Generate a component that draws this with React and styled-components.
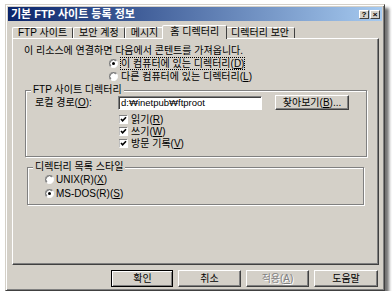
import React from 'react'
import styled, { createGlobalStyle, css } from 'styled-components'

const GlobalStyle = createGlobalStyle`
  html, body {
    margin: 0;
    background: #fff;
  }
  body {
    font-family: "Liberation Sans", "Noto Sans CJK KR", sans-serif;
    font-size: 10px;
    line-height: 12px;
    color: #000;
  }
`

const Page = styled.div`
  padding: 4px 0 0 5px;
`

const Window = styled.div`
  width: 380px;
  height: 287px;
  box-sizing: border-box;
  background: #d4d0c8;
  border: 1px solid;
  border-color: #d4d0c8 #404040 #404040 #d4d0c8;
  box-shadow: inset 1px 1px #fff, inset -1px -1px #808080, 4px 4px 3px rgba(0, 0, 0, 0.55);
  padding: 2px;
  display: flex;
  flex-direction: column;
`

const TitleBar = styled.div`
  height: 14px;
  background: linear-gradient(to right, #0a246a, #a6caf0);
  display: flex;
  align-items: center;
  padding: 0 2px 0 3px;
`

const Title = styled.div`
  flex: 1;
  color: #fff;
  font-weight: bold;
  font-size: 11px;
  line-height: 14px;
`

const CaptionButton = styled.div`
  width: 10px;
  height: 9px;
  margin-left: 1px;
  background: #d4d0c8;
  box-sizing: border-box;
  border: 1px solid;
  border-color: #fff #404040 #404040 #fff;
  font: bold 8px "Liberation Sans", sans-serif;
  line-height: 7px;
  text-align: center;
`

const Body = styled.div`
  flex: 1;
  display: flex;
  flex-direction: column;
  padding: 5px 3px 0 4px;
`

const TabRow = styled.div`
  display: flex;
  align-items: flex-end;
  height: 12px;
  position: relative;
  z-index: 1;
`

const Tab = styled.div`
  height: 10px;
  line-height: 10px;
  padding: 0 5px;
  border: 1px solid;
  border-bottom: none;
  border-color: #fff #404040 transparent #fff;
  border-radius: 2px 2px 0 0;
  white-space: nowrap;
  ${({ $active }) =>
    $active &&
    css`
      height: 13px;
      line-height: 12px;
      margin: 0 -2px -1px;
      padding: 0 7px;
      background: #d4d0c8;
      position: relative;
    `}
`

const Panel = styled.div`
  height: 227px;
  box-sizing: border-box;
  border: 1px solid;
  border-color: #fff #404040 #404040 #fff;
  box-shadow: inset -1px -1px #808080;
  padding-top: 6px;
  display: flex;
  flex-direction: column;
`

const Intro = styled.div`
  height: 12px;
  margin-left: 11px;
`

const Line = styled.div`
  display: flex;
  align-items: center;
  height: ${({ $h }) => $h}px;
  line-height: ${({ $h }) => Math.min($h, 11)}px;
  gap: ${({ $gap }) => $gap ?? 3}px;
  white-space: nowrap;
`

const Choices = styled.div`
  margin-left: 96px;
  display: flex;
  flex-direction: column;
`

const Focus = styled.span`
  outline: 1px dotted #000;
`

const Key = styled.span`
  text-decoration: underline;
`

const Group = styled.div`
  position: relative;
  margin: ${({ $top }) => $top}px 0 0 ${({ $left }) => $left}px;
  width: ${({ $w }) => $w}px;
  height: ${({ $h }) => $h}px;
  box-sizing: border-box;
  border: 1px solid #808080;
  box-shadow: inset 1px 1px #fff, 1px 1px #fff;
  padding: 4px 0 0 ${({ $pad }) => $pad}px;
  display: flex;
  flex-direction: column;
`

const Legend = styled.span`
  position: absolute;
  top: -6px;
  left: 5px;
  padding: 0 2px;
  background: #d4d0c8;
  line-height: 10px;
`

const PathRow = styled.div`
  display: flex;
  align-items: center;
  height: 15px;
  line-height: 11px;
`

const PathLabel = styled.div`
  width: 83px;
`

const TextInput = styled.div`
  width: 144px;
  height: 14px;
  box-sizing: border-box;
  background: #fff;
  border: 1px solid;
  border-color: #808080 #fff #fff #808080;
  box-shadow: inset 1px 1px #404040;
  padding-left: 2px;
  font-size: 9.5px;
  line-height: 12px;
`

const Button = styled.div`
  width: ${({ $w }) => $w}px;
  height: ${({ $h }) => $h}px;
  box-sizing: border-box;
  border: 1px solid;
  border-color: #fff #404040 #404040 #fff;
  box-shadow: inset -1px -1px #808080;
  display: flex;
  align-items: center;
  justify-content: center;
  white-space: nowrap;
  ${({ $default }) =>
    $default &&
    css`
      outline: 1px solid #000;
      outline-offset: -1px;
      border-width: 2px 1px 1px 2px;
    `}
  ${({ $disabled }) =>
    $disabled &&
    css`
      color: #808080;
      text-shadow: 1px 1px #fff;
    `}
`

const BrowseButton = styled(Button)`
  margin-left: 13px;
`

const Checks = styled.div`
  margin-top: 3px;
  padding-left: 84px;
  display: flex;
  flex-direction: column;
`

const ButtonRow = styled.div`
  display: flex;
  justify-content: flex-end;
  gap: 5px;
  margin-top: 5px;
  padding-right: 1px;
`

const Radio = ({ checked }) => (
  <svg width="9" height="9" viewBox="0 0 12 12">
    <circle cx="6" cy="6" r="5.5" fill="#fff" stroke="#fff" />
    <path d="M1.8 10.2 A5.5 5.5 0 0 1 10.2 1.8" stroke="#808080" fill="none" strokeWidth="1.2" />
    <path d="M2.6 9.4 A4.5 4.5 0 0 1 9.4 2.6" stroke="#404040" fill="none" strokeWidth="1" />
    {checked && <circle cx="6" cy="6" r="2" fill="#000" />}
  </svg>
)

const Check = () => (
  <svg width="9" height="9" viewBox="0 0 9 9">
    <rect x="0" y="0" width="9" height="9" fill="#fff" />
    <path d="M0 8.5 V0.5 H8.5" stroke="#808080" fill="none" />
    <path d="M0.5 9 V9 H9 V0" stroke="#fff" fill="none" />
    <path d="M2 4 L3.6 5.8 L7 2.2" stroke="#000" strokeWidth="1.6" fill="none" />
  </svg>
)

export default function App() {
  return (
    <Page>
      <GlobalStyle />
      <Window>
        <TitleBar>
          <Title>기본 FTP 사이트 등록 정보</Title>
          <CaptionButton>?</CaptionButton>
          <CaptionButton>×</CaptionButton>
        </TitleBar>
        <Body>
          <TabRow>
            <Tab>FTP 사이트</Tab>
            <Tab>보안 계정</Tab>
            <Tab>메시지</Tab>
            <Tab $active>홈 디렉터리</Tab>
            <Tab>디렉터리 보안</Tab>
          </TabRow>
          <Panel>
            <Intro>이 리소스에 연결하면 다음에서 콘텐트를 가져옵니다.</Intro>
            <Choices>
              <Line $h={13}>
                <Radio checked />
                <Focus>
                  이 컴퓨터에 있는 디렉터리(<Key>D</Key>)
                </Focus>
              </Line>
              <Line $h={13}>
                <Radio />
                <span>
                  다른 컴퓨터에 있는 디렉터리(<Key>L</Key>)
                </span>
              </Line>
            </Choices>
            <Group $top={7} $left={12} $w={342} $h={67} $pad={9}>
              <Legend>FTP 사이트 디렉터리</Legend>
              <PathRow>
                <PathLabel>
                  로컬 경로(<Key>O</Key>):
                </PathLabel>
                <TextInput>d:₩inetpub₩ftproot</TextInput>
                <BrowseButton $w={74} $h={15}>
                  찾아보기(<Key>B</Key>)...
                </BrowseButton>
              </PathRow>
              <Checks>
                <Line $h={12}>
                  <Check />
                  <span>
                    읽기(<Key>R</Key>)
                  </span>
                </Line>
                <Line $h={12}>
                  <Check />
                  <span>
                    쓰기(<Key>W</Key>)
                  </span>
                </Line>
                <Line $h={12}>
                  <Check />
                  <span>
                    방문 기록(<Key>V</Key>)
                  </span>
                </Line>
              </Checks>
            </Group>
            <Group $top={10} $left={14} $w={337} $h={38} $pad={17}>
              <Legend>디렉터리 목록 스타일</Legend>
              <Line $h={14} $gap={2}>
                <Radio />
                <span>
                  UNIX(R)(<Key>X</Key>)
                </span>
              </Line>
              <Line $h={14} $gap={2}>
                <Radio checked />
                <span>
                  MS-DOS(R)(<Key>S</Key>)
                </span>
              </Line>
            </Group>
          </Panel>
          <ButtonRow>
            <Button $w={62} $h={17} $default>
              확인
            </Button>
            <Button $w={63} $h={17}>
              취소
            </Button>
            <Button $w={63} $h={17} $disabled>
              적용(<Key>A</Key>)
            </Button>
            <Button $w={64} $h={17}>
              도움말
            </Button>
          </ButtonRow>
        </Body>
      </Window>
    </Page>
  )
}
